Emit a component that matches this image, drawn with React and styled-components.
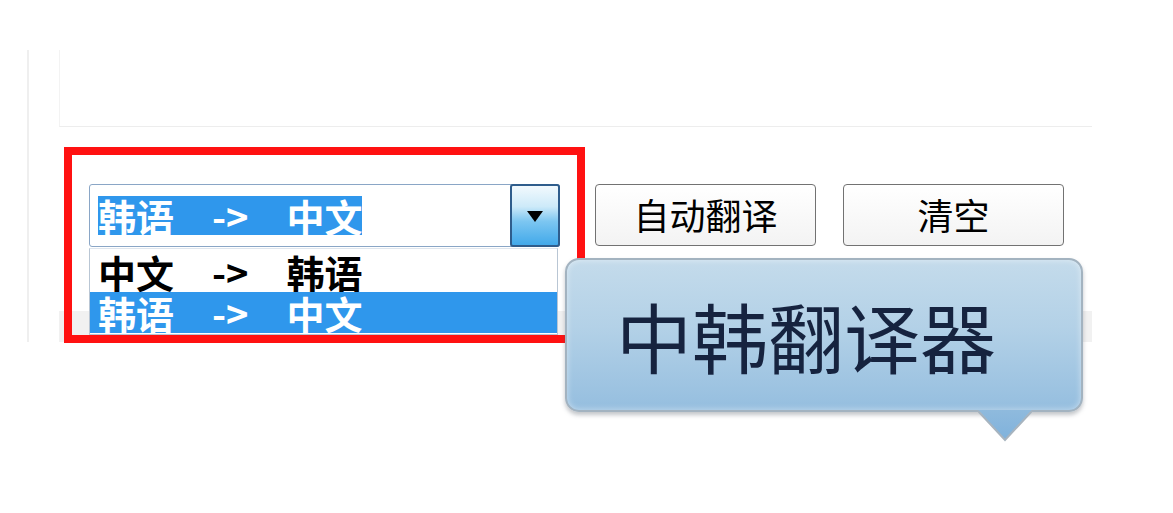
import React from 'react';
import styled, { createGlobalStyle } from 'styled-components';

const GlobalStyle = createGlobalStyle`
  html, body {
    margin: 0;
    padding: 0;
    background: #ffffff;
  }
  body {
    font-family: "Noto Sans CJK SC", "Noto Sans", sans-serif;
  }
`;

const CJK = `"Noto Sans CJK SC", "Noto Sans", sans-serif`;

const Page = styled.div`
  position: relative;
  width: 1173px;
  height: 513px;
  padding: 50px 0 0 27px;
  box-sizing: border-box;
`;

const Frame = styled.div`
  height: 292px;
  border-left: 2px solid #efefef;
  padding-left: 30px;
  display: flex;
  flex-direction: column;
`;

const TopPanel = styled.div`
  width: 1032px;
  height: 77px;
  border-left: 1px solid #f3f3f3;
  border-bottom: 1px solid #ededed;
`;

const Controls = styled.div`
  display: flex;
  align-items: flex-start;
  margin: 57px 0 0 30px;
  height: 63px;
`;

const Combo = styled.div`
  display: flex;
  width: 471px;
  height: 63px;
  box-sizing: border-box;
  border: 1px solid #8aa6c6;
  border-radius: 3px;
  background: #fff;
`;

const ComboField = styled.div`
  flex: 1;
  display: flex;
  align-items: center;
  padding-left: 8px;
`;

const Selected = styled.span`
  font-family: ${CJK};
  font-weight: 700;
  font-size: 38px;
  line-height: 39px;
  white-space: pre;
  color: ${(p) => (p.$active ? '#ffffff' : '#000000')};
  background: ${(p) => (p.$active ? '#2f97ec' : 'transparent')};
`;

const DropButton = styled.div`
  width: 50px;
  margin: -1px -1px -1px 0;
  box-sizing: border-box;
  border: 2px solid #2f5d8c;
  border-radius: 3px;
  background: linear-gradient(#f2f9fd 0%, #cdeaf9 35%, #7cc6f1 60%, #42a9ea 100%);
  display: flex;
  align-items: center;
  justify-content: center;
`;

const Arrow = styled.span`
  width: 0;
  height: 0;
  border-left: 8px solid transparent;
  border-right: 8px solid transparent;
  border-top: 11px solid #000;
  margin-top: 2px;
`;

const Button = styled.div`
  width: 221px;
  height: 62px;
  margin-left: ${(p) => p.$gap}px;
  box-sizing: border-box;
  border: 1px solid #727272;
  border-radius: 4px;
  background: linear-gradient(#ffffff, #f3f3f3);
  display: flex;
  align-items: center;
  justify-content: center;
  font-family: ${CJK};
  font-size: 36px;
  color: #000;
  padding-bottom: 2px;
`;

const Band = styled.div`
  width: 1033px;
  height: 31px;
  margin-top: 64px;
  background: #f1f1f1;
`;

const RedFrame = styled.div`
  position: absolute;
  left: 64px;
  top: 147px;
  width: 521px;
  height: 196px;
  box-sizing: border-box;
  border: 8px solid #ff1111;
`;

const DropList = styled.div`
  position: absolute;
  left: 89px;
  top: 248px;
  width: 469px;
  box-sizing: border-box;
  border: 1px solid #b9c6d4;
  border-top-color: #dfe6ee;
  background: #fff;
  padding: 2px 0 1px;
`;

const Option = styled.div`
  height: 41px;
  line-height: 40px;
  display: flex;
  align-items: center;
  padding-left: 8px;
  overflow: hidden;
  font-family: ${CJK};
  font-weight: 700;
  font-size: 38px;
  white-space: pre;
  color: ${(p) => (p.$active ? '#ffffff' : '#000000')};
  background: ${(p) => (p.$active ? '#2f97ec' : 'transparent')};
`;

const Callout = styled.div`
  position: absolute;
  left: 565px;
  top: 258px;
  width: 518px;
  height: 154px;
  box-sizing: border-box;
  border: 2px solid #a3b3c0;
  border-radius: 14px;
  background: linear-gradient(#c4dbeb 0%, #b3d1e7 45%, #95bedf 100%);
  box-shadow: 0 3px 4px rgba(80, 90, 100, 0.35), inset 0 0 6px rgba(255, 255, 255, 0.5);
  display: flex;
  align-items: center;
  padding-left: 49px;
  font-family: ${CJK};
  font-size: 76px;
  color: #16233f;
`;

const Tail = styled.svg`
  position: absolute;
  left: 411px;
  bottom: -32px;
`;

export default function App() {
  return (
    <Page>
      <GlobalStyle />
      <Frame>
        <TopPanel />
        <Controls>
          <Combo>
            <ComboField>
              <Selected $active>{'韩语　->　中文'}</Selected>
            </ComboField>
            <DropButton>
              <Arrow />
            </DropButton>
          </Combo>
          <Button $gap={35}>自动翻译</Button>
          <Button $gap={27}>清空</Button>
        </Controls>
        <Band />
      </Frame>

      <RedFrame />

      <DropList>
        <Option>{'中文　->　韩语'}</Option>
        <Option $active>{'韩语　->　中文'}</Option>
      </DropList>

      <Callout>
        中韩翻译器
        <Tail width="54" height="32" viewBox="0 0 54 32">
          <defs>
            <linearGradient id="tailFill" x1="0" y1="0" x2="0" y2="1">
              <stop offset="0" stopColor="#8fbadd" />
              <stop offset="1" stopColor="#7fb2dc" />
            </linearGradient>
          </defs>
          <path d="M0 0 L27 30 L54 0 Z" fill="url(#tailFill)" />
          <path d="M0 1 L27 30 L54 1" fill="none" stroke="#a7b4bf" strokeWidth="2" />
        </Tail>
      </Callout>
    </Page>
  );
}
